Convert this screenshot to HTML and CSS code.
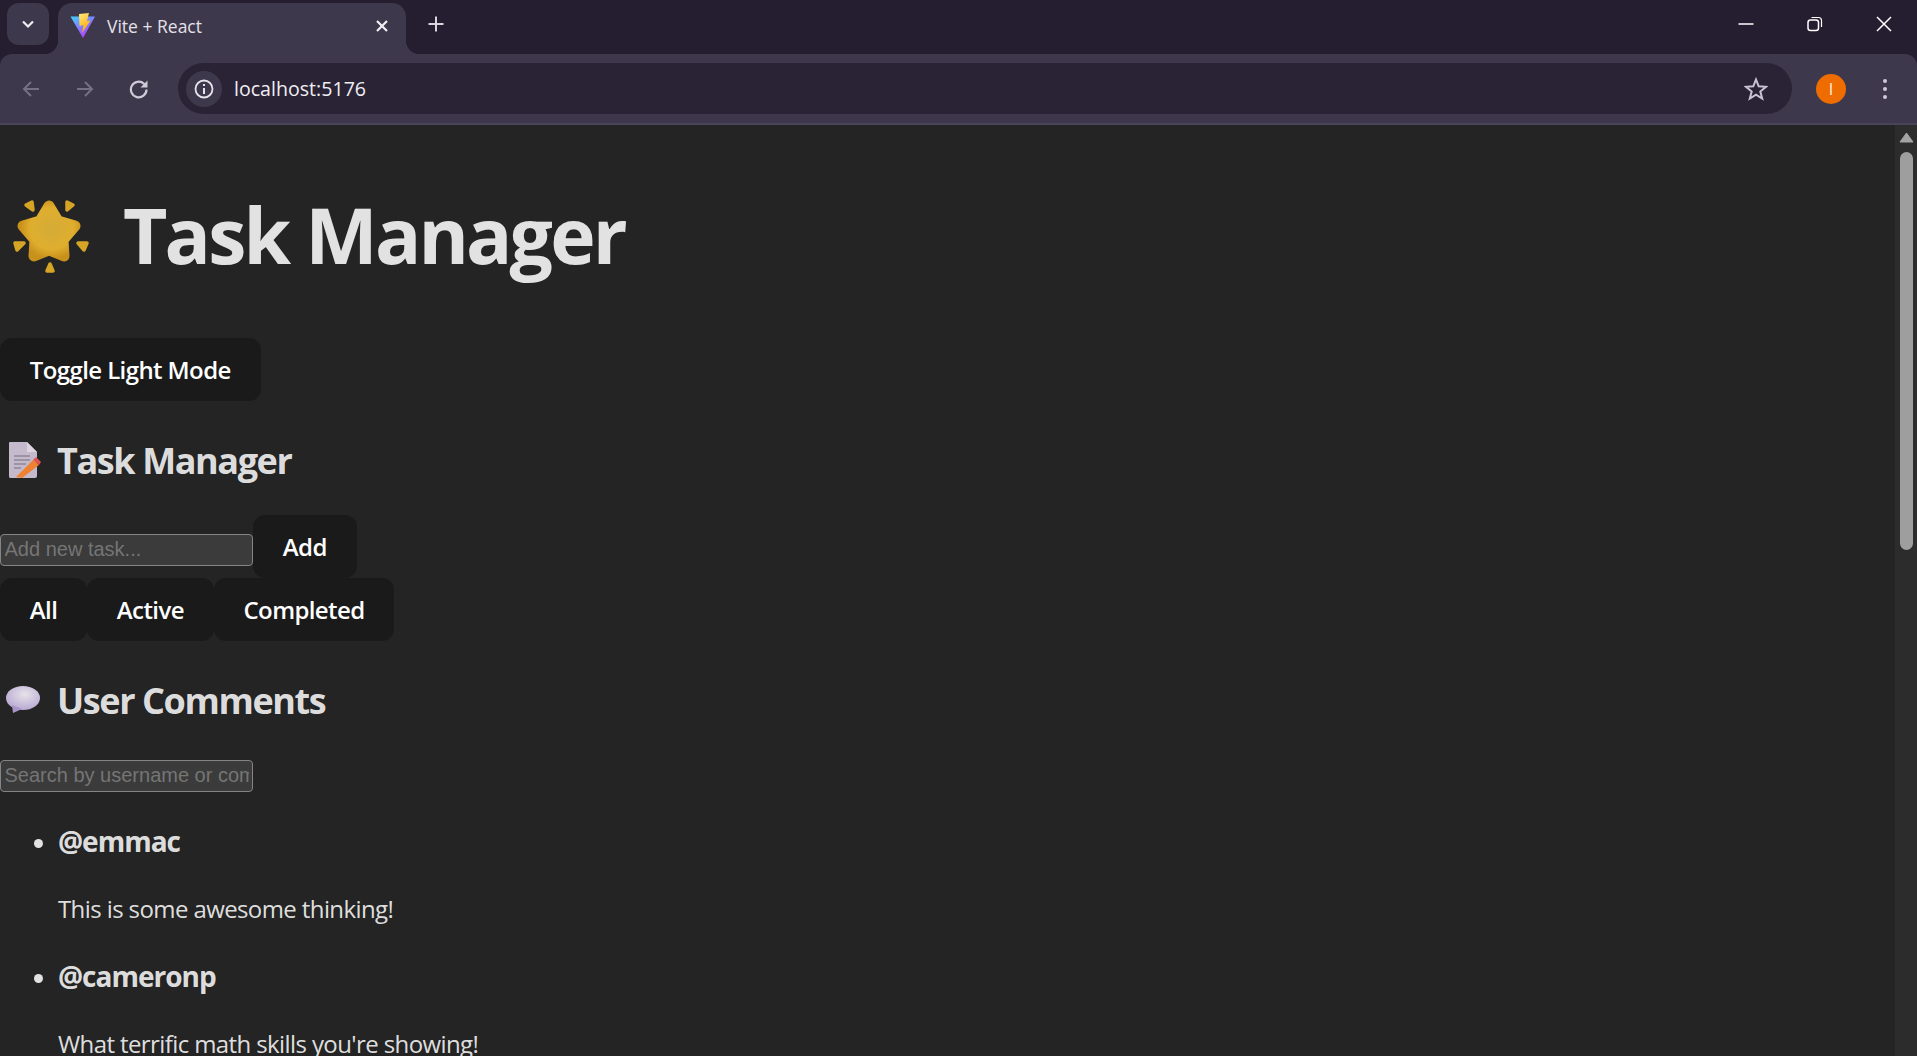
FILE: index.html
```html
<!DOCTYPE html>
<html lang="en">
<head>
    <meta charset="UTF-8">
    <title>Vite + React</title>
    <link rel="stylesheet" href="styles.css">
</head>
<body>
    <div class="browser">
        <div class="tabstrip">
            <div class="tab-search">
                <svg width="16" height="16" viewBox="0 0 16 16"><path d="M3 5.500 8 10.500 13 5.500" fill="none" stroke="#eee" stroke-width="2.200"/></svg>
            </div>
            <div class="tab">
                <svg class="favicon" width="26" height="26" viewBox="0 0 26 26">
                    <defs>
                        <linearGradient id="viteA" x1="0" y1="0" x2="0.7" y2="1">
                            <stop offset="0" stop-color="#41d1ff"/>
                            <stop offset="1" stop-color="#bd34fe"/>
                        </linearGradient>
                        <linearGradient id="viteB" x1="0" y1="0" x2="0.4" y2="1">
                            <stop offset="0" stop-color="#ffea83"/>
                            <stop offset="1" stop-color="#ffa800"/>
                        </linearGradient>
                    </defs>
                    <path d="M0.500 3.500 25 3.500 13 25Z" fill="url(#viteA)"/>
                    <path d="M9 1 19 0 17 8 20.500 7.500 12 20 13.500 12 9.500 13Z" fill="url(#viteB)"/>
                </svg>
                <span class="tab-title">Vite + React</span>
                <svg class="tab-close" width="14" height="14" viewBox="0 0 14 14"><path d="M2 2 12 12M12 2 2 12" stroke="#f2f0f5" stroke-width="2.200"/></svg>
            </div>
            <svg class="new-tab" width="18" height="18" viewBox="0 0 18 18"><path d="M9 1.500V16.500M1.500 9H16.500" stroke="#d8d4de" stroke-width="2"/></svg>
            <div class="window-controls">
                <svg width="16" height="16" viewBox="0 0 16 16"><path d="M0.500 8H15.500" stroke="#fff" stroke-width="1.500"/></svg>
                <svg width="16" height="16" viewBox="0 0 16 16"><rect x="1" y="4" width="10.500" height="10.500" rx="2.500" fill="none" stroke="#fff" stroke-width="1.500"/><path d="M4.500 1.500H11.500Q14.500 1.500 14.500 4.500V11" fill="none" stroke="#fff" stroke-width="1.200"/></svg>
                <svg width="16" height="16" viewBox="0 0 16 16"><path d="M1 1 15 15M15 1 1 15" stroke="#fff" stroke-width="1.500"/></svg>
            </div>
        </div>
        <div class="toolbar">
            <svg class="nav-icon" width="20" height="20" viewBox="0 0 20 20"><path d="M18 10H3M10 3 3 10 10 17" fill="none" stroke="#757083" stroke-width="2"/></svg>
            <svg class="nav-icon" width="20" height="20" viewBox="0 0 20 20"><path d="M2 10H17M10 3 17 10 10 17" fill="none" stroke="#757083" stroke-width="2"/></svg>
            <svg class="nav-icon" width="20" height="20" viewBox="0 0 20 20"><path d="M17.500 10.500A7.800 7.800 0 1 1 15 4.800L17.500 7.200" fill="none" stroke="#d0cbd9" stroke-width="2.200"/><path d="M18.500 1.500V8.500H11.500Z" fill="#d0cbd9"/></svg>
            <div class="omnibox">
                <div class="site-info">
                    <svg width="20" height="20" viewBox="0 0 20 20"><circle cx="10" cy="10" r="8.500" fill="none" stroke="#e6e3ea" stroke-width="1.800"/><path d="M10 9V15M10 5V7" stroke="#e6e3ea" stroke-width="2"/></svg>
                </div>
                <span class="url">localhost:5176</span>
                <svg class="star" width="24" height="24" viewBox="0 0 24 24"><path d="M12 2.500 14.700 9.300 22 9.800 16.300 14.500 18.200 21.500 12 17.600 5.800 21.500 7.700 14.500 2 9.800 9.300 9.300Z" fill="none" stroke="#c9c4d2" stroke-width="2"/></svg>
            </div>
            <div class="avatar"><span>I</span></div>
            <div class="menu-dots"><i></i><i></i><i></i></div>
        </div>
    </div>

    <div class="viewport">
        <main class="page">
            <h1 class="title">
                <svg class="emoji-star" width="110" height="90" viewBox="0 0 110 90">
                    <defs>
                        <radialGradient id="starFill" cx="0.55" cy="0.45" r="0.6">
                            <stop offset="0" stop-color="#d4ab38"/>
                            <stop offset="0.7" stop-color="#dfae2e"/>
                            <stop offset="1" stop-color="#c8911c"/>
                        </radialGradient>
                    </defs>
                    <path d="M49 16 58 31 75 36 63 50 64 66 49 60 34 66 35 50 23 36 40 31Z" fill="url(#starFill)" stroke="url(#starFill)" stroke-width="11" stroke-linejoin="round"/>
                    <g fill="#d6a526" stroke="#d6a526" stroke-width="3.500" stroke-linejoin="round">
                        <path d="M26 15 32 12 33 20Z"/>
                        <path d="M67 12 73 15 67 20Z"/>
                        <path d="M15 53 24 53 17 60Z"/>
                        <path d="M78 53 87 53 84 60Z"/>
                        <path d="M50 74 53 81 47 81Z"/>
                    </g>
                </svg>
                <span>Task Manager</span>
            </h1>
            <button class="btn">Toggle Light Mode</button>
            <h2 class="section-title">
                <svg class="emoji" width="60" height="50" viewBox="0 0 60 50">
                    <path d="M9 12Q9 11 10 11H27L37 21V45Q37 47 35 47H10Q9 47 9 45Z" fill="#c4bacb"/>
                    <path d="M27 11 37 21H27Z" fill="#dcd5e0"/>
                    <path d="M14 25H30M14 29H30M14 33H26M14 37H21" stroke="#8f8799" stroke-width="1.500"/>
                    <path d="M16 46 33 29 39 34 22 47Z" fill="#ee8232"/>
                    <path d="M33 29 36 26 41 31 39 34Z" fill="#e0544c"/>
                </svg>
                <span>Task Manager</span>
            </h2>
            <div class="task-form"><input class="field" type="text" placeholder="Add new task..."><button class="btn">Add</button></div>
            <div class="filters"><button class="btn">All</button><button class="btn">Active</button><button class="btn">Completed</button></div>
            <h2 class="section-title">
                <svg class="emoji" width="60" height="50" viewBox="0 0 60 50">
                    <defs>
                        <radialGradient id="bubbleFill" cx="0.55" cy="0.35" r="0.7">
                            <stop offset="0" stop-color="#e6e2e8"/>
                            <stop offset="1" stop-color="#b6a5d2"/>
                        </radialGradient>
                    </defs>
                    <ellipse cx="23" cy="27" rx="17" ry="12" fill="url(#bubbleFill)"/>
                    <path d="M12 34 13 42 22 38Z" fill="#a895c8"/>
                </svg>
                <span>User Comments</span>
            </h2>
            <div><input class="field" type="text" placeholder="Search by username or comment"></div>
            <ul class="comments">
                <li><h3>@emmac</h3><p>This is some awesome thinking!</p></li>
                <li><h3>@cameronp</h3><p>What terrific math skills you're showing!</p></li>
            </ul>
        </main>
        <div class="scrollbar">
            <svg width="15" height="11" viewBox="0 0 15 11"><path d="M7.500 1 14 10H1Z" fill="#a3a3a3" stroke="#a3a3a3" stroke-linejoin="round"/></svg>
            <div class="thumb"></div>
        </div>
    </div>
</body>
</html>
```
FILE: styles.css
```css
* {
    box-sizing: border-box;
}
html, body {
    height: 100%;
}
body {
    margin: 0;
    overflow: hidden;
    display: flex;
    flex-direction: column;
    background-color: #242424;
    color: rgba(255, 255, 255, 0.87);
    font-family: "Open Sans", "Noto Sans", sans-serif;
}

/* browser chrome */
.browser {
    flex: none;
    background-color: #241e30;
}
.tabstrip {
    height: 54px;
    display: flex;
    align-items: flex-start;
    padding: 3px 0 0 7px;
}
.tab-search {
    width: 42px;
    height: 42px;
    border-radius: 12px;
    background-color: #3e384c;
    display: flex;
    align-items: center;
    justify-content: center;
}
.tab {
    position: relative;
    width: 348px;
    height: 51px;
    margin-left: 9px;
    padding: 0 17px 6px 12px;
    border-radius: 14px 14px 0 0;
    background-color: #3e384c;
    display: flex;
    align-items: center;
}
.tab::before,
.tab::after {
    content: "";
    position: absolute;
    bottom: 0;
    width: 14px;
    height: 14px;
}
.tab::before {
    left: -14px;
    background: radial-gradient(circle at 0 0, transparent 14px, #3e384c 14.5px);
}
.tab::after {
    right: -14px;
    background: radial-gradient(circle at 100% 0, transparent 14px, #3e384c 14.5px);
}
.favicon {
    flex: none;
}
.tab-title {
    margin-left: 11px;
    flex: 1;
    font-size: 17.5px;
    color: #e4e1e8;
}
.new-tab {
    margin: 12px 0 0 21px;
}
.window-controls {
    margin-left: auto;
    display: flex;
    gap: 53px;
    padding: 13px 25px 0 0;
}
.toolbar {
    height: 71px;
    display: flex;
    align-items: center;
    padding-left: 21px;
    border-radius: 12px 12px 0 0;
    border-bottom: 2px solid #4a4458;
    background-color: #3e384c;
}
.nav-icon {
    margin-right: 34px;
}
.nav-icon:nth-child(3) {
    margin-right: 29px;
}
.omnibox {
    width: 1614px;
    height: 51px;
    padding: 0 24px 0 8px;
    border-radius: 26px;
    background-color: #2a2336;
    display: flex;
    align-items: center;
}
.site-info {
    width: 36px;
    height: 36px;
    border-radius: 50%;
    background-color: #3e384c;
    display: flex;
    align-items: center;
    justify-content: center;
}
.url {
    margin-left: 12px;
    flex: 1;
    font-size: 19.6px;
    color: #f0eef3;
}
.avatar {
    width: 30px;
    height: 30px;
    margin-left: 24px;
    border-radius: 50%;
    background-color: #ef6c00;
    color: #fff3e8;
    font-size: 16px;
    display: flex;
    align-items: center;
    justify-content: center;
}
.menu-dots {
    margin-left: 37px;
    display: flex;
    flex-direction: column;
    gap: 4px;
}
.menu-dots i {
    width: 4px;
    height: 4px;
    border-radius: 50%;
    background-color: #cfc9d8;
}

/* page */
.viewport {
    flex: 1;
    min-height: 0;
    display: flex;
}
.page {
    flex: 1;
    overflow: hidden;
    padding-top: 65px;
    font-size: 24px;
    line-height: 36px;
}
.scrollbar {
    flex: none;
    width: 22px;
    background-color: #2c2c2c;
    display: flex;
    flex-direction: column;
    align-items: center;
    padding-top: 7px;
}
.thumb {
    width: 13px;
    height: 398px;
    margin-top: 9px;
    border-radius: 7px;
    background-color: #9e9e9e;
}
.title {
    margin: 0 0 58px;
    font-size: 76.8px;
    line-height: 84px;
    font-weight: 700;
    letter-spacing: -2.85px;
    display: flex;
    align-items: center;
    gap: 13px;
}
.section-title {
    height: 54px;
    margin: 30px 0;
    font-size: 36px;
    line-height: 54px;
    font-weight: 700;
    letter-spacing: -1.4px;
    display: flex;
    align-items: center;
}
.section-title span {
    padding-top: 5px;
}
.emoji {
    flex: none;
    align-self: flex-start;
    margin-right: -3px;
}
.btn {
    height: 63px;
    padding: 0 28.8px;
    border: 1.5px solid transparent;
    border-radius: 12px;
    background-color: #1a1a1a;
    color: #fff;
    font-family: inherit;
    font-size: 24px;
    font-weight: 600;
    letter-spacing: -0.6px;
}
.filters {
    display: flex;
}
.task-form {
    height: 63px;
}
.field {
    width: 253px;
    height: 32px;
    padding: 1.500px 3.500px;
    border: 1px solid #858585;
    border-radius: 4px;
    background-color: #3b3b3b;
    color: #fff;
    font-family: "Liberation Sans", Arial, sans-serif;
    font-size: 20px;
}
.field::placeholder {
    color: #757575;
}
.comments {
    margin: 28px 0 0;
    padding: 0 0 0 58px;
    letter-spacing: -0.6px;
}
.comments h3 {
    margin: 28px 0 29px;
    font-size: 28px;
    line-height: 42px;
    font-weight: 700;
    letter-spacing: -1px;
}
.comments p {
    margin: 24px 0;
}
```
